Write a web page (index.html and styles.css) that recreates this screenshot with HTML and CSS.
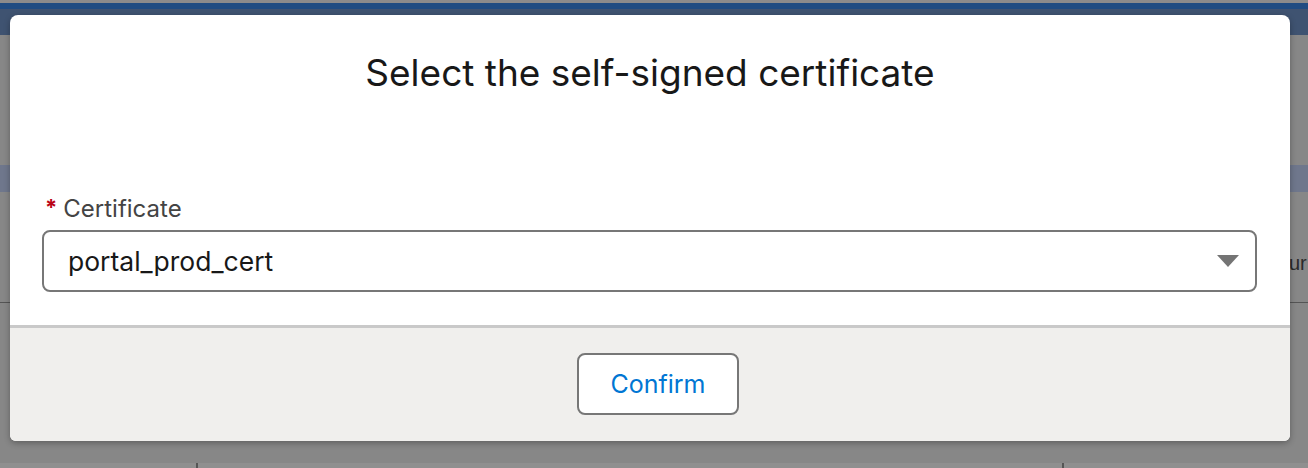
FILE: index.html
```html
<!DOCTYPE html>
<html lang="en">
<head>
<meta charset="utf-8">
<title>Select the self-signed certificate</title>
<link rel="stylesheet" href="styles.css">
</head>
<body>
<div class="page">
  <div class="strip strip-top"></div>
  <div class="strip strip-blue"></div>
  <div class="strip strip-slate"></div>
  <div class="gap gap-1"></div>
  <div class="strip strip-band"></div>
  <div class="row-text"><span class="peek">ur</span></div>
  <div class="strip strip-line"></div>
  <div class="gap gap-2"></div>
  <div class="bottom-band"><span class="tick tick-1"></span><span class="tick tick-2"></span></div>
</div>

<div class="modal" role="dialog" aria-labelledby="modal-title">
  <header class="modal-header">
    <h1 id="modal-title" class="modal-title">Select the self-signed certificate</h1>
  </header>
  <div class="modal-body">
    <label class="field-label" for="cert"><abbr class="required" title="required">*</abbr>Certificate</label>
    <div class="select-box" id="cert">
      <span class="select-value">portal_prod_cert</span>
      <svg class="select-arrow" width="22" height="12" viewBox="0 0 22 12" aria-hidden="true"><polygon points="0,0 22,0 11,12" fill="#747474"/></svg>
    </div>
  </div>
  <footer class="modal-footer">
    <button class="btn" type="button">Confirm</button>
  </footer>
</div>
</body>
</html>
```

FILE: styles.css
```css
html, body {
  margin: 0;
  padding: 0;
}
body {
  width: 1308px;
  height: 468px;
  overflow: hidden;
  background: #878787;
  font-family: Inter, "Liberation Sans", Arial, sans-serif;
  position: relative;
}
.page {
  display: flex;
  flex-direction: column;
  height: 468px;
}
.strip { flex: none; }
.strip-top { height: 3px; background: #8b8b8b; }
.strip-blue { height: 6px; background: #1f4c82; }
.strip-slate { height: 26px; background: #3f5371; }
.gap-1 { height: 130px; }
.strip-band { height: 27px; background: #6f778c; }
.row-text {
  height: 78px;
  padding-top: 32px;
  display: flex;
  align-items: center;
  padding-left: 1289px;
  color: #2a2a2a;
  font-family: "Liberation Sans", Arial, sans-serif;
  font-size: 20px;
}
.peek { white-space: nowrap; }
.strip-line { height: 1px; background: #555555; }
.gap-2 { flex: 1; }
.bottom-band {
  height: 5px;
  background: #8f8f8f;
  position: relative;
  flex: none;
}
.tick {
  position: absolute;
  top: 0;
  width: 2px;
  height: 5px;
  background: #555;
}
.tick-1 { left: 196px; }
.tick-2 { left: 1062px; }

.modal {
  position: absolute;
  left: 10px;
  top: 15px;
  width: 1280px;
  display: flex;
  flex-direction: column;
  background: #ffffff;
  border-radius: 8px 8px 6px 6px;
  box-shadow: 0 2px 6px rgba(0, 0, 0, 0.3);
  overflow: hidden;
}
.modal-header {
  padding: 37px 28px 0;
  text-align: center;
}
.modal-title {
  margin: 0;
  font-size: 37px;
  line-height: 42px;
  font-weight: 400;
  color: #181818;
}
.modal-body {
  padding: 100px 33px 33px 32px;
  display: flex;
  flex-direction: column;
  gap: 8px;
}
.field-label {
  display: flex;
  align-items: center;
  height: 28px;
  font-size: 24px;
  color: #444444;
  padding-left: 3px;
}
.required {
  text-decoration: none;
  border: 0;
  color: #ba0517;
  font-size: 22px;
  font-weight: 700;
  margin-right: 6px;
  align-self: flex-start;
  margin-top: 0;
}
.select-box {
  height: 62px;
  box-sizing: border-box;
  border: 2px solid #777777;
  border-radius: 8px;
  display: flex;
  align-items: center;
  justify-content: space-between;
  padding: 0 16px 0 24px;
}
.select-value {
  font-size: 26.5px;
  color: #181818;
}
.select-arrow { display: block; }
.modal-footer {
  border-top: 3px solid #c9c9c9;
  background: #f0efed;
  padding: 25px 0 26px 16px;
  display: flex;
  justify-content: center;
}
.btn {
  width: 162px;
  height: 62px;
  box-sizing: border-box;
  border: 2px solid #777777;
  border-radius: 8px;
  background: #ffffff;
  color: #0176d3;
  font-family: inherit;
  font-size: 25px;
  padding: 0;
  cursor: pointer;
}
```
